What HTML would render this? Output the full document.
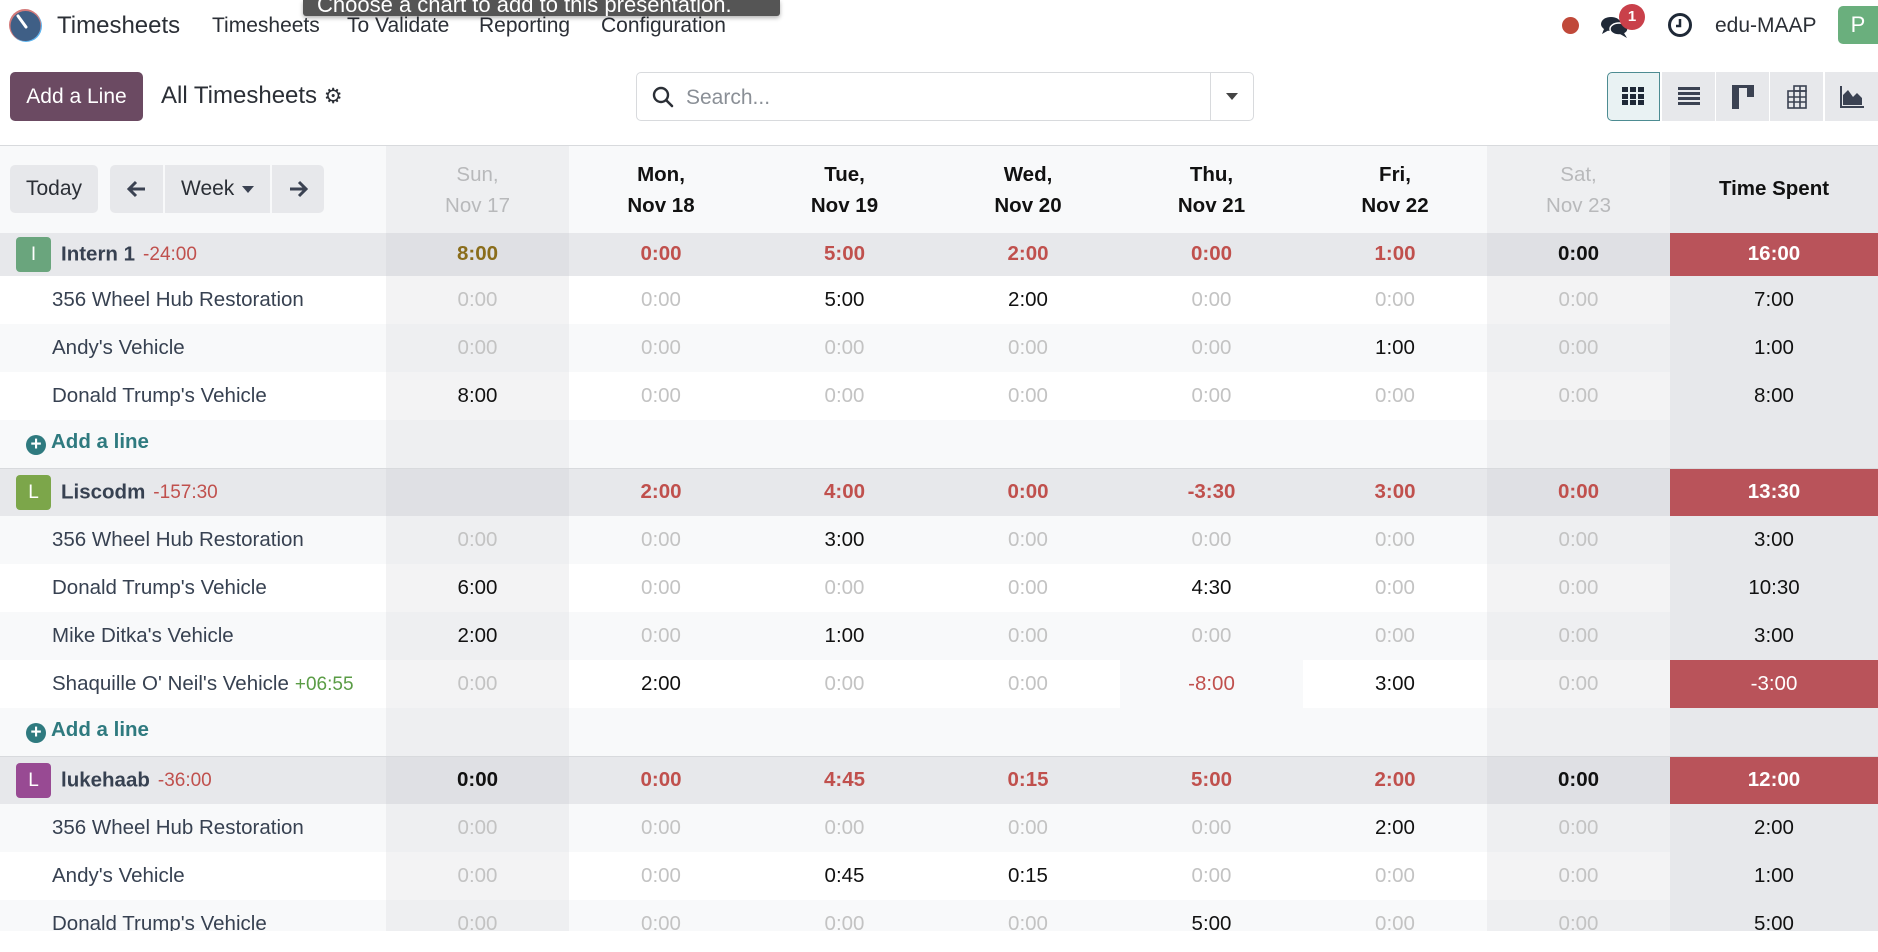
<!DOCTYPE html>
<html><head><meta charset="utf-8">
<style>
*{box-sizing:border-box;margin:0;padding:0}
body{width:1878px;height:952px;background:#fff;font-family:"Liberation Sans",sans-serif;color:#212529;position:relative;overflow:hidden}
.a{position:absolute}
.nav{font-size:21px;color:#2b2f36;top:14px}
table{position:absolute;left:0;top:146px;border-collapse:collapse;table-layout:fixed;width:1878px;font-size:20.5px}
td{height:48px;text-align:center;padding:0;white-space:nowrap;overflow:hidden;line-height:1}
tr.first td{height:43px}
td.n{text-align:left;padding-left:52px;color:#374151}
.m{color:#c3c3c3}
.r{color:#c0504d}
.b{color:#111}
tr.g td{background:#e7e8eb;font-weight:bold}
tr.g td.we{background:#dfe0e4}
tr.g td.n{padding-left:16px;font-weight:normal}
tr.w td{background:#fff}
tr.w td.we{background:#f3f3f4}
tr.s td{background:#f8f9fa}
tr.s td.we{background:#eeeff1}
td.t{background:#e7e8eb !important;color:#111}
td.red{background:#b9535a !important;color:#fff !important;font-weight:bold}
.av{display:inline-block;width:35px;height:35px;border-radius:4px;color:#fff;text-align:center;line-height:35px;font-size:19px;vertical-align:middle;margin-right:10px;font-weight:normal}
.gn{font-weight:bold;color:#374151;vertical-align:middle}
.neg{color:#c0504d;font-size:19px;margin-left:8px;vertical-align:middle}
.pos{color:#5a9c45;font-size:19px;margin-left:6px}
.add td.n{padding-left:26px;color:#2f7a7f;font-weight:bold}
.btn{position:absolute;background:#e7e8eb;border-radius:5px;font-size:21px;color:#2b2f36;text-align:center;line-height:48px;height:48px}
.vb{position:absolute;top:72px;height:49px;background:#e7e8eb;width:53px}
.plus{display:inline-block;width:20px;height:20px;border-radius:50%;background:#2f7a7f;color:#fff;font-size:19px;line-height:20px;text-align:center;vertical-align:-2px;margin-right:5px}
</style></head><body>
<svg class="a" style="left:8px;top:8px" width="36" height="36" viewBox="0 0 36 36"><circle cx="18" cy="18" r="16" fill="#5ab4f0"/><circle cx="17" cy="17" r="16" fill="#d37a7a"/><circle cx="17.5" cy="18" r="15" fill="#3f5f86"/><line x1="10" y1="8" x2="18" y2="19" stroke="#fff" stroke-width="3" stroke-linecap="round"/></svg>
<div class="a" style="left:57px;top:12px;font-size:24px;color:#2b2f36">Timesheets</div>
<div class="a nav" style="left:212px">Timesheets</div>
<div class="a nav" style="left:347px">To Validate</div>
<div class="a nav" style="left:479px">Reporting</div>
<div class="a nav" style="left:601px">Configuration</div>
<div class="a" style="left:303px;top:0;width:477px;height:16px;background:#555;border-radius:0 0 3px 3px;overflow:hidden;box-shadow:0 2px 4px rgba(0,0,0,.3)"><div style="color:#fff;font-size:22px;position:absolute;top:-8px;left:14px;white-space:nowrap">Choose a chart to add to this presentation.</div></div>
<div class="a" style="left:1562px;top:17px;width:17px;height:17px;border-radius:50%;background:#c0493a"></div>
<svg class="a" style="left:1600px;top:14px" width="30" height="26" viewBox="0 0 30 26"><ellipse cx="11" cy="10" rx="10" ry="7" fill="#1f2937"/><path d="M4 15 L2 20 L9 16Z" fill="#1f2937"/><ellipse cx="19" cy="15" rx="9" ry="6" fill="#1f2937" stroke="#fff" stroke-width="1.5"/><path d="M24 19 L27 24 L20 20Z" fill="#1f2937"/></svg>
<div class="a" style="left:1619px;top:4px;width:26px;height:26px;border-radius:50%;background:#c9404a;color:#fff;font-size:15px;font-weight:bold;text-align:center;line-height:26px">1</div>
<svg class="a" style="left:1667px;top:12px" width="26" height="26" viewBox="0 0 26 26"><circle cx="13" cy="13" r="10.5" fill="none" stroke="#1f2937" stroke-width="3"/><path d="M13 7 V14 H9" fill="none" stroke="#1f2937" stroke-width="2.5"/></svg>
<div class="a nav" style="left:1715px;top:14px">edu-MAAP</div>
<div class="a" style="left:1838px;top:6px;width:40px;height:38px;background:#6aaf7d;border-radius:5px 0 0 5px;color:#fff;font-size:22px;line-height:38px;text-align:center">P</div>
<div class="a" style="left:10px;top:72px;width:133px;height:49px;background:#6b4a62;border-radius:5px;color:#fff;font-size:21px;text-align:center;line-height:49px">Add a Line</div>
<div class="a" style="left:161px;top:82px;font-size:24px;color:#2b2f36">All Timesheets <span style="font-size:21px">⚙</span></div>
<div class="a" style="left:636px;top:72px;width:618px;height:49px;border:1px solid #d8dadd;border-radius:5px"></div>
<div class="a" style="left:1210px;top:73px;width:1px;height:47px;background:#d8dadd"></div>
<svg class="a" style="left:652px;top:86px" width="22" height="22" viewBox="0 0 22 22"><circle cx="9" cy="9" r="7" fill="none" stroke="#2b2f36" stroke-width="2.4"/><line x1="14" y1="14" x2="20" y2="20" stroke="#2b2f36" stroke-width="2.6" stroke-linecap="round"/></svg>
<div class="a" style="left:686px;top:86px;font-size:21px;color:#8a8f96">Search...</div>
<div class="a" style="left:1226px;top:93px;border-left:6px solid transparent;border-right:6px solid transparent;border-top:7px solid #444"></div>
<div class="vb" style="left:1607px;background:#e9f2f3;border:1px solid #4d8c92;border-radius:5px 0 0 5px"></div>
<div class="vb" style="left:1662px"></div><div class="vb" style="left:1716px"></div><div class="vb" style="left:1770px"></div><div class="vb" style="left:1825px;width:53px"></div>
<svg class="a" style="left:1622px;top:87px" width="22" height="18" viewBox="0 0 22 18"><g fill="#1f2937"><rect x="0" y="0" width="6" height="5"/><rect x="8" y="0" width="6" height="5"/><rect x="16" y="0" width="6" height="5"/><rect x="0" y="7" width="6" height="5"/><rect x="8" y="7" width="6" height="5"/><rect x="16" y="7" width="6" height="5"/><rect x="0" y="13" width="6" height="5"/><rect x="8" y="13" width="6" height="5"/><rect x="16" y="13" width="6" height="5"/></g></svg>
<svg class="a" style="left:1678px;top:87px" width="22" height="18" viewBox="0 0 22 18"><g fill="#3b4252"><rect y="0" width="22" height="3"/><rect y="5" width="22" height="3"/><rect y="10" width="22" height="3"/><rect y="15" width="22" height="3"/></g></svg>
<svg class="a" style="left:1732px;top:85px" width="22" height="24" viewBox="0 0 22 24"><g fill="#3b4252"><rect x="0" y="0" width="22" height="3"/><rect x="0" y="0" width="7" height="24"/><rect x="15" y="0" width="7" height="12"/></g></svg>
<svg class="a" style="left:1787px;top:85px" width="20" height="24" viewBox="0 0 20 24"><g fill="none" stroke="#3b4252" stroke-width="1.6"><rect x="1" y="6" width="18" height="17"/><rect x="7" y="1" width="12" height="5"/><line x1="1" y1="12" x2="19" y2="12"/><line x1="1" y1="17" x2="19" y2="17"/><line x1="7" y1="6" x2="7" y2="23"/><line x1="13" y1="1" x2="13" y2="23"/></g></svg>
<svg class="a" style="left:1840px;top:86px" width="24" height="22" viewBox="0 0 24 22"><path d="M1 0 V21 H24" fill="none" stroke="#3b4252" stroke-width="2"/><path d="M3 19 L3 9 L8 4 L13 11 L17 7 L22 12 L22 19Z" fill="#3b4252"/></svg>
<div class="a" style="left:0;top:145px;width:1878px;height:1px;background:#d8dadd"></div>
<table>
<colgroup><col style="width:386px"><col style="width:183px"><col style="width:184px"><col style="width:183px"><col style="width:184px"><col style="width:183px"><col style="width:184px"><col style="width:183px"><col style="width:208px"></colgroup>
<tr style="background:#f8f9fa;font-weight:bold">
<td style="height:87px;background:#f8f9fa"></td>
<td style="background:#eeeff1;color:#b8b9bb;font-weight:normal;line-height:31px">Sun,<br>Nov 17</td>
<td style="line-height:31px;color:#111">Mon,<br>Nov 18</td>
<td style="line-height:31px;color:#111">Tue,<br>Nov 19</td>
<td style="line-height:31px;color:#111">Wed,<br>Nov 20</td>
<td style="line-height:31px;color:#111">Thu,<br>Nov 21</td>
<td style="line-height:31px;color:#111">Fri,<br>Nov 22</td>
<td style="background:#eeeff1;color:#b8b9bb;font-weight:normal;line-height:31px">Sat,<br>Nov 23</td>
<td style="background:#e7e8eb;color:#111">Time Spent</td></tr>

<tr class="g first"><td class="n"><span class="av" style="background:#6aa57d">I</span><span class="gn">Intern 1</span><span class="neg">-24:00</span></td><td class="we" style="color:#8a6d1b">8:00</td><td class="r">0:00</td><td class="r">5:00</td><td class="r">2:00</td><td class="r">0:00</td><td class="r">1:00</td><td class="we b">0:00</td><td class="red">16:00</td></tr>
<tr class="w"><td class="n">356 Wheel Hub Restoration</td><td class="we m">0:00</td><td class="m">0:00</td><td class="b">5:00</td><td class="b">2:00</td><td class="m">0:00</td><td class="m">0:00</td><td class="we m">0:00</td><td class="t">7:00</td></tr>
<tr class="s"><td class="n">Andy's Vehicle</td><td class="we m">0:00</td><td class="m">0:00</td><td class="m">0:00</td><td class="m">0:00</td><td class="m">0:00</td><td class="b">1:00</td><td class="we m">0:00</td><td class="t">1:00</td></tr>
<tr class="w"><td class="n">Donald Trump's Vehicle</td><td class="we b">8:00</td><td class="m">0:00</td><td class="m">0:00</td><td class="m">0:00</td><td class="m">0:00</td><td class="m">0:00</td><td class="we m">0:00</td><td class="t">8:00</td></tr>
<tr class="s add" style="border-bottom:1px solid #d8dadd"><td class="n"><span class="plus">+</span>Add a line</td><td class="we"></td><td></td><td></td><td></td><td></td><td></td><td class="we"></td><td class="t"></td></tr>

<tr class="g"><td class="n"><span class="av" style="background:#7ca64a">L</span><span class="gn">Liscodm</span><span class="neg">-157:30</span></td><td class="we"></td><td class="r">2:00</td><td class="r">4:00</td><td class="r">0:00</td><td class="r">-3:30</td><td class="r">3:00</td><td class="we r">0:00</td><td class="red">13:30</td></tr>
<tr class="s"><td class="n">356 Wheel Hub Restoration</td><td class="we m">0:00</td><td class="m">0:00</td><td class="b">3:00</td><td class="m">0:00</td><td class="m">0:00</td><td class="m">0:00</td><td class="we m">0:00</td><td class="t">3:00</td></tr>
<tr class="w"><td class="n">Donald Trump's Vehicle</td><td class="we b">6:00</td><td class="m">0:00</td><td class="m">0:00</td><td class="m">0:00</td><td class="b">4:30</td><td class="m">0:00</td><td class="we m">0:00</td><td class="t">10:30</td></tr>
<tr class="s"><td class="n">Mike Ditka's Vehicle</td><td class="we b">2:00</td><td class="m">0:00</td><td class="b">1:00</td><td class="m">0:00</td><td class="m">0:00</td><td class="m">0:00</td><td class="we m">0:00</td><td class="t">3:00</td></tr>
<tr class="w"><td class="n">Shaquille O' Neil's Vehicle<span class="pos">+06:55</span></td><td class="we m">0:00</td><td class="b">2:00</td><td class="m">0:00</td><td class="m">0:00</td><td class="r" style="background:#f8f9fa">-8:00</td><td class="b">3:00</td><td class="we m">0:00</td><td class="red" style="font-weight:normal">-3:00</td></tr>
<tr class="s add" style="border-bottom:1px solid #d8dadd"><td class="n"><span class="plus">+</span>Add a line</td><td class="we"></td><td></td><td></td><td></td><td></td><td></td><td class="we"></td><td class="t"></td></tr>

<tr class="g"><td class="n"><span class="av" style="background:#984a93">L</span><span class="gn">lukehaab</span><span class="neg">-36:00</span></td><td class="we b">0:00</td><td class="r">0:00</td><td class="r">4:45</td><td class="r">0:15</td><td class="r">5:00</td><td class="r">2:00</td><td class="we b">0:00</td><td class="red">12:00</td></tr>
<tr class="s"><td class="n">356 Wheel Hub Restoration</td><td class="we m">0:00</td><td class="m">0:00</td><td class="m">0:00</td><td class="m">0:00</td><td class="m">0:00</td><td class="b">2:00</td><td class="we m">0:00</td><td class="t">2:00</td></tr>
<tr class="w"><td class="n">Andy's Vehicle</td><td class="we m">0:00</td><td class="m">0:00</td><td class="b">0:45</td><td class="b">0:15</td><td class="m">0:00</td><td class="m">0:00</td><td class="we m">0:00</td><td class="t">1:00</td></tr>
<tr class="s"><td class="n">Donald Trump's Vehicle</td><td class="we m">0:00</td><td class="m">0:00</td><td class="m">0:00</td><td class="m">0:00</td><td class="b">5:00</td><td class="m">0:00</td><td class="we m">0:00</td><td class="t">5:00</td></tr>
</table>
<div class="a" style="left:0;top:931px;width:1878px;height:21px;background:#fff"></div>
<div class="btn" style="left:10px;top:165px;width:88px">Today</div>
<div class="btn" style="left:110px;top:165px;width:214px"></div>
<div class="a" style="left:163px;top:165px;width:2px;height:48px;background:#f8f9fa"></div>
<div class="a" style="left:270px;top:165px;width:2px;height:48px;background:#f8f9fa"></div>
<svg class="a" style="left:127px;top:180px" width="20" height="18" viewBox="0 0 20 18"><path d="M18 9 H3 M9 2 L2 9 L9 16" fill="none" stroke="#3b4252" stroke-width="3"/></svg>
<svg class="a" style="left:288px;top:180px" width="20" height="18" viewBox="0 0 20 18"><path d="M2 9 H17 M11 2 L18 9 L11 16" fill="none" stroke="#3b4252" stroke-width="3"/></svg>
<div class="a" style="left:181px;top:177px;font-size:21px;color:#2b2f36">Week</div>
<div class="a" style="left:242px;top:186px;border-left:6px solid transparent;border-right:6px solid transparent;border-top:7px solid #3b4252"></div>
</body></html>
